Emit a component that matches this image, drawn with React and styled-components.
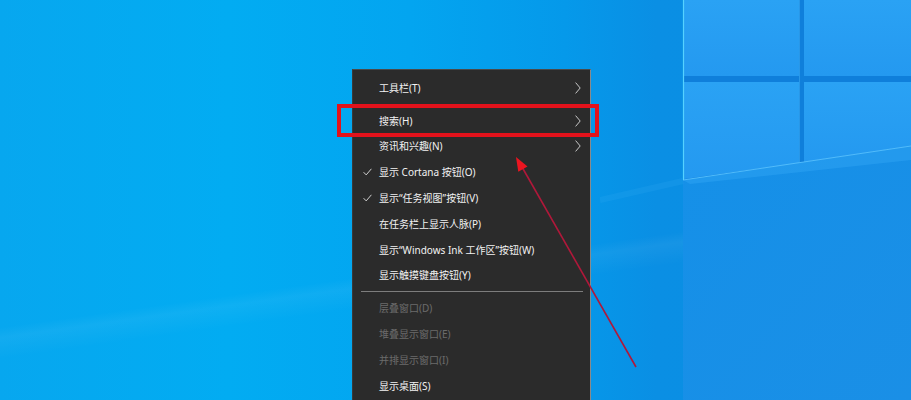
import React from "react";
import styled, { createGlobalStyle } from "styled-components";

const GlobalStyle = createGlobalStyle`
  html, body { margin: 0; padding: 0; overflow: hidden; }
  body { font-family: "Noto Sans", "Noto Sans CJK SC", sans-serif; }
`;

const Desktop = styled.div`
  position: relative;
  width: 911px;
  height: 400px;
  overflow: hidden;
  background:
    linear-gradient(172deg, rgba(255,255,255,0) 0%, rgba(255,255,255,0) 62%, rgba(255,255,255,0.05) 64%, rgba(255,255,255,0) 68%),
    linear-gradient(90deg, #07a7ef 0%, #02acf2 25%, #03a5f0 45%, #0599ea 62%, #0a8fe4 72%, #0b8de3 100%);
`;

const Logo = styled.svg`
  position: absolute;
  left: 600px;
  top: 0;
  width: 311px;
  height: 400px;
`;

const Menu = styled.div`
  position: absolute;
  left: 352px;
  top: 69px;
  width: 239px;
  height: 340px;
  box-sizing: border-box;
  padding-top: 5px;
  background: #2b2b2b;
  border-left: 1px solid #3a3a3a;
  border-right: 1px solid #8a8a8a;
  border-top: 1px solid #4a4a4a;
  display: flex;
  flex-direction: column;
`;

const Item = styled.div`
  display: grid;
  grid-template-columns: 26px 1fr 8px;
  align-items: center;
  height: 25.8px;
  padding-right: 7px;
  margin-bottom: ${(p) => (p.$spaced ? "7px" : "0")};
  font-size: 10px;
  color: ${(p) => (p.$disabled ? "#6b6b6b" : "#f2f2f2")};
  white-space: nowrap;
`;

const CheckCell = styled.span`
  display: flex;
  justify-content: flex-end;
  padding-right: 7px;
`;

const Label = styled.span`
  line-height: 1;
`;

const ArrowCell = styled.span`
  display: flex;
  align-items: center;
`;

const Separator = styled.div`
  height: 1px;
  margin: 3px 7px 3px 8px;
  background: #7d7d7d;
`;

const Highlight = styled.div`
  position: absolute;
  left: 337px;
  top: 104px;
  width: 262px;
  height: 33px;
  box-sizing: border-box;
  border: 4px solid #e3121b;
`;

const Annotation = styled.svg`
  position: absolute;
  left: 0;
  top: 0;
  width: 911px;
  height: 400px;
  pointer-events: none;
`;

const Check = () => (
  <svg width="9" height="8" viewBox="0 0 9 8">
    <path d="M0.6 4.2 L3.2 6.9 L8.4 0.8" fill="none" stroke="#cfcfcf" strokeWidth="1" />
  </svg>
);

const Chevron = () => (
  <svg width="6" height="12" viewBox="0 0 6 12">
    <path d="M0.6 0.6 L5.2 6 L0.6 11.4" fill="none" stroke="#c8c8c8" strokeWidth="1" />
  </svg>
);

const items = [
  { label: "工具栏(T)", sub: true, spaced: true },
  { label: "搜索(H)", sub: true },
  { label: "资讯和兴趣(N)", sub: true },
  { label: "显示 Cortana 按钮(O)", checked: true },
  { label: "显示“任务视图”按钮(V)", checked: true },
  { label: "在任务栏上显示人脉(P)" },
  { label: "显示“Windows Ink 工作区”按钮(W)" },
  { label: "显示触摸键盘按钮(Y)" },
  { sep: true },
  { label: "层叠窗口(D)", disabled: true },
  { label: "堆叠显示窗口(E)", disabled: true },
  { label: "并排显示窗口(I)", disabled: true },
  { label: "显示桌面(S)" },
];

export default function App() {
  return (
    <>
      <GlobalStyle />
      <Desktop>
        <Logo viewBox="0 0 311 400">
          <defs>
            <linearGradient id="pane" x1="0" y1="0" x2="0" y2="1">
              <stop offset="0" stopColor="#2aa2f4" />
              <stop offset="1" stopColor="#2499f0" />
            </linearGradient>
            <linearGradient id="floor" x1="0" y1="0" x2="1" y2="1">
              <stop offset="0" stopColor="#1590e8" />
              <stop offset="1" stopColor="#1a8fe6" />
            </linearGradient>
          </defs>
          <polygon points="83,0 311,0 311,146 83,180" fill="#0f7fdb" />
          <rect x="84" y="0" width="115" height="76" fill="url(#pane)" />
          <rect x="204" y="0" width="107" height="76" fill="url(#pane)" />
          <polygon points="84,82 199,82 199,163 84,179" fill="url(#pane)" />
          <polygon points="204,82 311,82 311,146 204,162" fill="url(#pane)" />
          <polygon points="83,180 311,146 311,400 83,400" fill="url(#floor)" />
          <polygon points="83,180 311,146 311,160 90,184" fill="#2ea3f2" opacity="0.55" />
          <line x1="83.5" y1="0" x2="83.5" y2="180" stroke="#55d2ff" strokeWidth="1.2" />
          <line x1="83" y1="180" x2="311" y2="146" stroke="#5fc6ff" strokeWidth="1" opacity="0.8" />
          <line x1="199.5" y1="0" x2="199.5" y2="163" stroke="#46b4f8" strokeWidth="0.8" opacity="0.6" />
          <line x1="0" y1="200" x2="83" y2="181" stroke="#2aa6f0" strokeWidth="6" opacity="0.25" />
        </Logo>

        <Menu>
          {items.map((it, i) =>
            it.sep ? (
              <Separator key={i} />
            ) : (
              <Item key={i} $disabled={it.disabled} $spaced={it.spaced}>
                <CheckCell>{it.checked ? <Check /> : null}</CheckCell>
                <Label>{it.label}</Label>
                <ArrowCell>{it.sub ? <Chevron /> : null}</ArrowCell>
              </Item>
            )
          )}
        </Menu>

        <Highlight />

        <Annotation viewBox="0 0 911 400">
          <line x1="636" y1="367" x2="522" y2="167" stroke="#b0183a" strokeWidth="1.6" />
          <polygon points="516,157 527.5,166.5 518.3,171.8" fill="#ec1520" />
        </Annotation>
      </Desktop>
    </>
  );
}
